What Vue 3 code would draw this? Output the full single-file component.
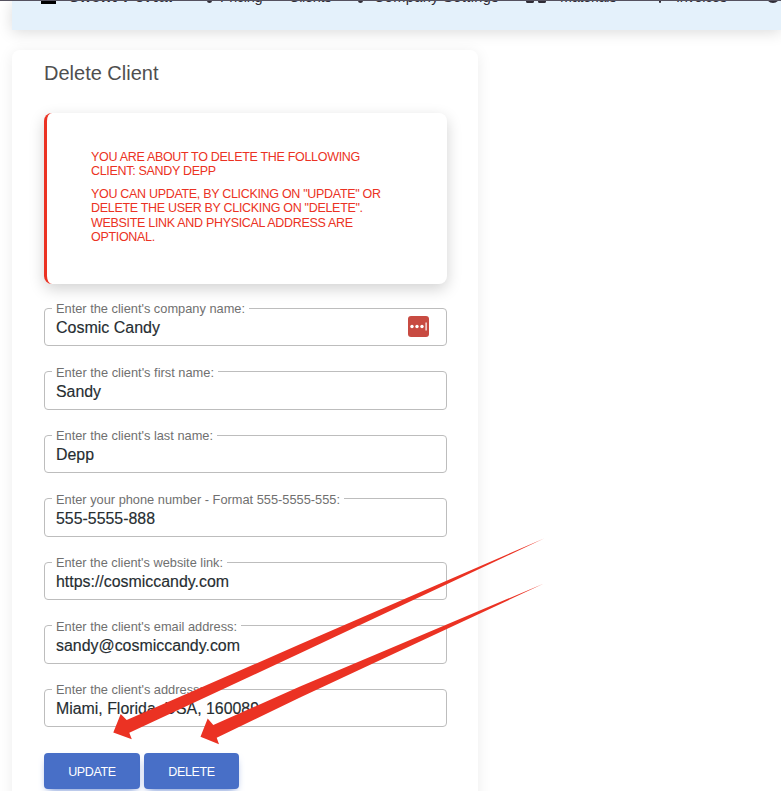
<script setup>
const fields = [
  { label: "Enter the client's company name:", w: 189, value: 'Cosmic Candy', vw: 104, badge: true },
  { label: "Enter the client's first name:", w: 158, value: 'Sandy', vw: 45 },
  { label: "Enter the client's last name:", w: 157, value: 'Depp', vw: 38 },
  { label: 'Enter your phone number - Format 555-5555-555:', w: 284, value: '555-5555-888', vw: 99 },
  { label: "Enter the client's website link:", w: 167, value: 'https://cosmiccandy.com', vw: 173 },
  { label: "Enter the client's email address:", w: 181, value: 'sandy@cosmiccandy.com', vw: 184 },
  { label: "Enter the client's address:", w: 147, value: 'Miami, Florida, USA, 160089', vw: 203 },
]
const message = [
  ['YOU ARE ABOUT TO DELETE THE FOLLOWING', 'CLIENT: SANDY DEPP'],
  ['YOU CAN UPDATE, BY CLICKING ON "UPDATE" OR', 'DELETE THE USER BY CLICKING ON "DELETE".', 'WEBSITE LINK AND PHYSICAL ADDRESS ARE', 'OPTIONAL.'],
]
</script>

<template>
  <div class="page">
    <header class="navbar">
      <div class="nav-row">
        <svg class="logo" viewBox="0 0 15 16"><path d="M0 2H15V16H0Z" /></svg>
        <span class="brand">Client Portal</span>
        <i class="drop"></i>
        <span class="n1">Pricing</span>
        <span class="n2">Clients</span>
        <i class="drop"></i>
        <span class="n3">Company Settings</span>
        <svg class="grid-icon" viewBox="0 0 20 16"><path d="M0 0H8V14.500Q8 16 6.500 16H1.500Q0 16 0 14.500ZM12 0H20V14.500Q20 16 18.500 16H13.500Q12 16 12 14.500Z" /></svg>
        <span class="n4">Materials</span>
        <i class="drop thin"></i>
        <span class="n5">Invoices</span>
        <svg class="user" viewBox="0 0 14 14"><circle cx="7" cy="7" r="7" /></svg>
      </div>
    </header>

    <main class="card">
      <h1>Delete Client</h1>
      <section class="alert">
        <p v-for="(para, i) in message" :key="i">
          <span v-for="line in para" :key="line">{{ line }}</span>
        </p>
      </section>
      <form class="form">
        <fieldset v-for="f in fields" :key="f.label" class="field">
          <legend>
            <svg class="label" height="16" :width="f.w">
              <text x="0" y="12.700" :textLength="f.w" lengthAdjust="spacingAndGlyphs">{{ f.label }}</text>
            </svg>
          </legend>
          <svg class="value" height="22" :width="f.vw">
            <text x="0" y="16.700" :textLength="f.vw" lengthAdjust="spacingAndGlyphs">{{ f.value }}</text>
          </svg>
          <svg v-if="f.badge" class="badge" viewBox="0 0 21 21">
            <rect width="21" height="21" rx="3" fill="#c84b42" />
            <g fill="#fff"><circle cx="4" cy="10.500" r="1.700" /><circle cx="9" cy="10.500" r="1.700" /><circle cx="14" cy="10.500" r="1.700" /><rect x="17.500" y="6.500" width="1.200" height="8" /></g>
          </svg>
        </fieldset>
      </form>
      <div class="buttons">
        <button type="button" class="update">UPDATE</button>
        <button type="button" class="delete">DELETE</button>
      </div>
    </main>

    <svg class="arrows" viewBox="0 0 781 791">
      <path d="M544 538.500L300 644.300L126.700 720L120.700 714L113.300 732.500L131.800 739.300L129.300 732.700L300 653.300Z" />
      <path d="M544 583.500L300 686.500L213.300 725L207.700 718.500L200.500 736.800L219 744.200L216.700 737.700L300 697.500Z" />
    </svg>
  </div>
</template>

<style>
body { margin: 0; overflow: hidden; background: #fff; }
</style>
<style scoped>
* { box-sizing: border-box; }
.page { position: relative; width: 781px; height: 791px; overflow: hidden; font-family: "Liberation Sans", Arial, sans-serif; border-top: 1px solid #55525f; }
.navbar { height: 29px; margin-left: 12px; background: #e4f1fb; box-shadow: 0 2px 15px rgba(0,0,0,.15); }
.nav-row { height: 7px; overflow: hidden; display: flex; align-items: flex-end; color: #302d36; font-size: 14.500px; line-height: 18px; }
.nav-row span { white-space: nowrap; flex: none; height: 18px; margin-bottom: 2px; }
.logo { width: 15px; height: 16px; margin: 0 12px 4px 29px; flex: none; fill: #000; }
.nav-row .brand { width: 139px; font-size: 16px; font-weight: 700; letter-spacing: .9px; }
.drop { flex: none; width: 5px; height: 8px; margin: 0 8px 5px 0; border-radius: 0 0 3px 3px; background: #302d36; }
.drop.thin { width: 2px; margin-right: 15px; }
.n1 { width: 69px; letter-spacing: -.3px; }
.n2 { width: 69px; letter-spacing: -.3px; }
.n3 { width: 155px; padding-left: 3px; letter-spacing: .4px; }
.grid-icon { width: 20px; height: 16px; margin: 0 14px 5px 0; flex: none; fill: #302d36; }
.n4 { width: 99px; letter-spacing: -.3px; }
.n5 { width: 90px; letter-spacing: -.3px; }
.user { width: 14px; height: 14px; flex: none; margin-bottom: 5px; fill: #302d36; }
.card { width: 466px; height: 790px; margin: 20px 0 0 12px; padding: 11px 31px 0 32px; border-radius: 8px; background: #fff; box-shadow: 0 2px 15px rgba(0,0,0,.08); }
h1 { margin: 0; height: 52px; font-size: 20px; line-height: 24px; font-weight: 400; color: #4f4f4f; }
.alert { width: 403px; height: 171px; border-left: 3px solid #eb3223; border-radius: 8px; padding: 37px 0 0 44px; box-shadow: 0 5px 15px rgba(0,0,0,.18); color: #eb3223; font-size: 12.500px; line-height: 14.400px; letter-spacing: -.31px; background: #fff; }
.alert p { margin: 0 0 8px; }
.alert span { display: block; white-space: nowrap; }
.form { display: grid; gap: 17.500px; margin-top: 16px; }
.field { position: relative; margin: 0; min-width: 0; width: 403px; height: 46px; padding: 0 11px; border: 1px solid #bdbdbd; border-radius: 4px; }
legend { padding: 0 4px; margin-left: -4px; height: 16px; line-height: 0; }
.label { font-size: 13px; fill: #707070; display: block; overflow: visible; }
.value { font-size: 16px; fill: #262d31; stroke: #262d31; stroke-width: .15px; display: block; overflow: visible; }
.badge { position: absolute; right: 17px; top: 0; width: 21px; height: 21px; }
.buttons { display: flex; gap: 4px; margin-top: 26px; }
button { height: 36px; padding: 1px 0 0; border: 0; border-radius: 4px; background: #486fc7; color: #fff; font: 12.500px "Liberation Sans", sans-serif; letter-spacing: -.35px; box-shadow: 0 4px 9px -4px #486fc7; }
.update { width: 96px; }
.delete { width: 95px; }
.arrows { position: absolute; left: 0; top: -1px; width: 781px; height: 791px; pointer-events: none; fill: #eb3223; }
</style>
